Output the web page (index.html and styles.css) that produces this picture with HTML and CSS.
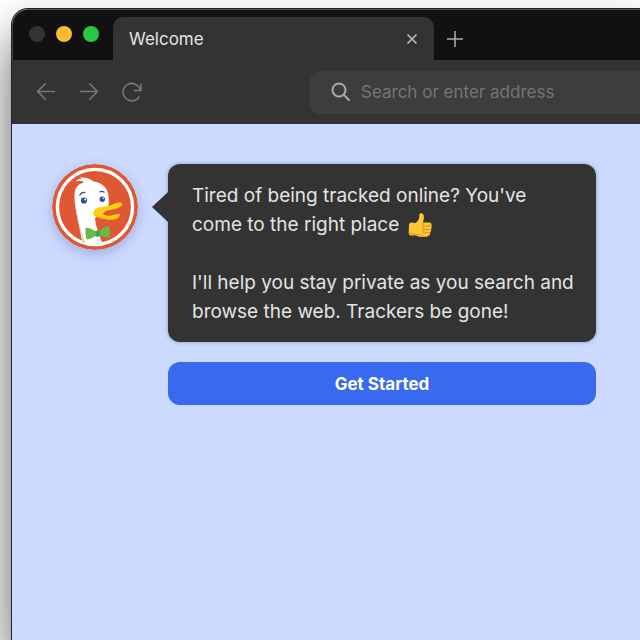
FILE: index.html
```html
<!DOCTYPE html>
<html lang="en">
<head>
<meta charset="utf-8">
<title>Welcome</title>
<link rel="stylesheet" href="styles.css">
</head>
<body>
<div class="window">
  <header class="tab-bar">
    <div class="lights">
      <button class="light" aria-label="Close window"></button>
      <button class="light light-yellow" aria-label="Minimize window"></button>
      <button class="light light-green" aria-label="Zoom window"></button>
    </div>
    <div class="tab">
      <span>Welcome</span>
      <button class="icon-button tab-close" aria-label="Close tab">
        <svg width="12" height="12" viewBox="0 0 12 12"><path d="M1.500 1.500l9 9M10.500 1.500l-9 9"/></svg>
      </button>
    </div>
    <button class="icon-button new-tab" aria-label="New tab">
      <svg width="18" height="18" viewBox="0 0 18 18"><path d="M9 1v16M1 9h16"/></svg>
    </button>
  </header>
  <nav class="toolbar">
    <div class="nav-buttons">
      <button class="icon-button" aria-label="Back">
        <svg width="20" height="20" viewBox="0 0 20 20"><path d="M19 9.500H1.500M9.800 1.300l-8.200 8.200 8.200 8.200"/></svg>
      </button>
      <button class="icon-button" aria-label="Forward">
        <svg width="20" height="20" viewBox="0 0 20 20"><path d="M1 9.500h17.500M10.200 1.300l8.200 8.200-8.200 8.200"/></svg>
      </button>
      <button class="icon-button" aria-label="Reload">
        <svg width="20" height="20" viewBox="0 0 20 20"><path d="M17.300 14.500A8.700 8.700 0 1 1 18.200 8M19 1.500V8.500H12"/></svg>
      </button>
    </div>
    <label class="address">
      <svg width="20" height="20" viewBox="0 0 20 20"><circle cx="8" cy="8" r="6.500"/><path d="M12.700 12.700l6 6"/></svg>
      <input type="text" placeholder="Search or enter address" aria-label="Address">
    </label>
  </nav>
  <main class="page">
    <svg class="avatar" width="86" height="86" viewBox="0 0 86 86" role="img" aria-label="DuckDuckGo">
      <circle cx="43" cy="43" r="43" fill="#de5833"/>
      <circle cx="43" cy="43" r="37.600" fill="none" stroke="#fff" stroke-width="3.400"/>
      <path d="M30.500 79C28 64 23 46 22.500 34C22 25 25 20 32 18.500C30 16.500 27 16.500 24 17.500C25.500 15 28 14.300 30 14.500C29 13.800 28 13.800 26.500 13.800C33 12.500 38.500 14.500 41.500 17.500C50 18.500 56 24 56.500 32C57 38 57 42 55 46L43 54C43.500 61 47 71 50.500 79.500Q40 82 30.500 79Z" fill="#fff"/>
      <path d="M30.500 79C28 64 23 46 22.500 34C24 46 28 64 33.500 79.500Z" fill="#d5d7d8"/>
      <path d="M27.500 31.500Q29.500 27.800 33.500 28.500M47.500 28.300Q50 26.300 52.500 28.500" fill="none" stroke="#394c93" stroke-width="1.200"/>
      <circle cx="32" cy="36.500" r="3.100" fill="#2d4f9e"/>
      <circle cx="50.300" cy="35.300" r="2.700" fill="#2d4f9e"/>
      <circle cx="33.200" cy="35.500" r=".9" fill="#fff"/>
      <circle cx="51.300" cy="34.300" r=".8" fill="#fff"/>
      <path d="M41.300 48.500C42 44 47 43.200 53 42.600C60 41.500 64 38.300 68 38.300C71.500 38.500 71 41.500 68 43C64 45.300 58 46.200 53 46.800C48.500 48 51 51.500 56.500 51.700C61 51.700 65 49.500 67.500 50.200C68.500 53 64 55.800 59 55.600C51 55.300 40.500 53.500 41.300 48.500Z" fill="#fdd20a"/>
      <path d="M41.300 48.500C40.500 53.500 51 55.300 59 55.600C64 55.800 68.500 53 67.500 50.200C65.500 53.500 59 54.300 53.500 53C47 51.700 42 51 41.300 48.500Z" fill="#f8bf0a"/>
      <path d="M33.500 64Q36 63 43.500 67.300Q45.500 66 47.500 67Q54 61.500 57.300 62Q58.500 67 57.500 73.700Q53 73.500 48 71.500Q46 73.500 43.500 72Q38 75.500 34.500 75.500Q33 70 33.500 64Z" fill="#65bc46"/>
      <path d="M43.500 67.300Q45.500 66 47.500 67L48 71.500Q46 73.500 43.500 72Z" fill="#43a244"/>
    </svg>
    <section class="dialog">
      <div class="bubble">
        <p>Tired of being tracked online? You've come to the right place
          <svg class="thumb" width="24" height="26" viewBox="0 0 24 26" role="img" aria-label="thumbs up">
            <path d="M1 13Q1 10.500 3.500 10.500L7.500 11C10.500 9 11.500 6.500 11.200 3.500C11 .7 15 .3 15.700 3.500C16.200 6 15.500 8.500 15 10.500H21.500Q23.800 10.800 23.600 13Q24 15.500 23.200 16.700Q23.500 19 22.300 20.200Q22.300 23 20.500 23.800Q18 25.300 14 25C10.500 25 8.500 23 6.500 23.200L3 23.500Q.8 23.500 .7 21.500Z" fill="#fdc633"/>
            <path d="M.9 20.500Q1 23.500 3 23.500L6.500 23.200C8.500 23 10.500 25 14 25Q18.500 25.300 20.500 23.800Q15.500 24.300 11.500 22.500Q7 20.800 .9 20.500Z" fill="#f2a528"/>
            <path d="M15.500 14H23M15.500 17.500H22.500M15.500 20.800H21.500M15.200 11Q13.500 12.500 15.500 14Q13.800 16 15.500 17.500Q14 19.500 15.500 20.800" fill="none" stroke="#dd8d1b"/>
          </svg></p>
        <p>I'll help you stay private as you search and browse the web. Trackers be gone!</p>
      </div>
      <button class="primary">Get Started</button>
    </section>
  </main>
</div>
</body>
</html>
```
FILE: styles.css
```css
* {
  box-sizing: border-box;
}

body {
  margin: 0;
  min-height: 100vh;
  display: flex;
  padding: 9px 0 0 12px;
  background: #fff;
  font-family: Inter, "Liberation Sans", sans-serif;
}

button {
  border: 0;
  padding: 0;
  font: inherit;
}

.window {
  display: flex;
  flex: 1;
  flex-direction: column;
  min-width: 0;
  background: #ccdaff;
  border-radius: 16px 0 0 0;
  overflow: hidden;
  box-shadow: 0 0 0 1px #222, 0 28px 50px rgba(0, 0, 0, 0.65);
}

.tab-bar {
  display: flex;
  height: 51px;
  background: #111;
  border-top: 1px solid #555;
  border-left: 1px solid #444;
  border-top-left-radius: 16px;
}

.lights {
  display: flex;
  gap: 11px;
  padding: 16px 14px 0 16px;
}

.light {
  width: 16px;
  height: 16px;
  border-radius: 50%;
  background: #333;
}

.light-yellow {
  background: #febc2e;
}

.light-green {
  background: #28c840;
}

.tab {
  display: flex;
  align-items: center;
  justify-content: space-between;
  width: 321px;
  margin-top: 7px;
  padding: 0 16px;
  border-radius: 10px 10px 0 0;
  background: #333;
  color: #e4e4e4;
  font-size: 17px;
}

.icon-button {
  display: flex;
  background: none;
  color: #777;
}

.icon-button svg,
.address svg {
  fill: none;
  stroke: currentColor;
  stroke-width: 1.6;
}

.tab-close {
  color: #bbb;
}

.new-tab {
  align-self: center;
  margin: 8px 0 0 12px;
  color: #aaa;
}

.toolbar {
  display: flex;
  align-items: center;
  height: 64px;
  padding-left: 24px;
  background: #333;
}

.nav-buttons {
  display: flex;
  gap: 23px;
  width: 274px;
}

.address {
  display: flex;
  flex: 1;
  align-items: center;
  gap: 10px;
  height: 43px;
  padding-left: 21px;
  border-radius: 10px 0 0 10px;
  background: #3d3d3d;
  color: #aaa;
}

.address svg {
  flex: none;
  stroke-width: 2;
}

.address input {
  flex: 1;
  min-width: 0;
  border: 0;
  padding: 0;
  background: none;
  color: #eee;
  font: inherit;
  font-size: 17px;
}

.address input::placeholder {
  color: #757575;
}

.page {
  display: flex;
  flex: 1;
  align-items: flex-start;
  gap: 30px;
  padding: 40px 44px 40px 40px;
}

.avatar {
  flex: none;
  border-radius: 50%;
  box-shadow: 0 4px 12px rgba(60, 80, 150, 0.3);
}

.dialog {
  display: flex;
  flex: 1;
  flex-direction: column;
  gap: 20px;
}

.bubble {
  position: relative;
  padding: 17px 20px 16px 24px;
  border-radius: 12px;
  background: #333;
  box-shadow: 0 0 4px rgba(40, 50, 100, 0.4);
  color: #e3e3e3;
  font-size: 19px;
  line-height: 29px;
}

.bubble::before {
  content: "";
  position: absolute;
  top: 28px;
  left: -16px;
  width: 16px;
  height: 30px;
  background: #333;
  clip-path: polygon(0 50%, 100% 0, 100% 100%);
}

.bubble p {
  margin: 0;
}

.bubble p + p {
  margin-top: 29px;
}

.thumb {
  margin: -4px 0 -4px 3px;
  vertical-align: -3px;
}

.primary {
  height: 43px;
  border-radius: 12px;
  background: #3969ef;
  color: #fff;
  font-size: 17px;
  font-weight: 700;
}
```
